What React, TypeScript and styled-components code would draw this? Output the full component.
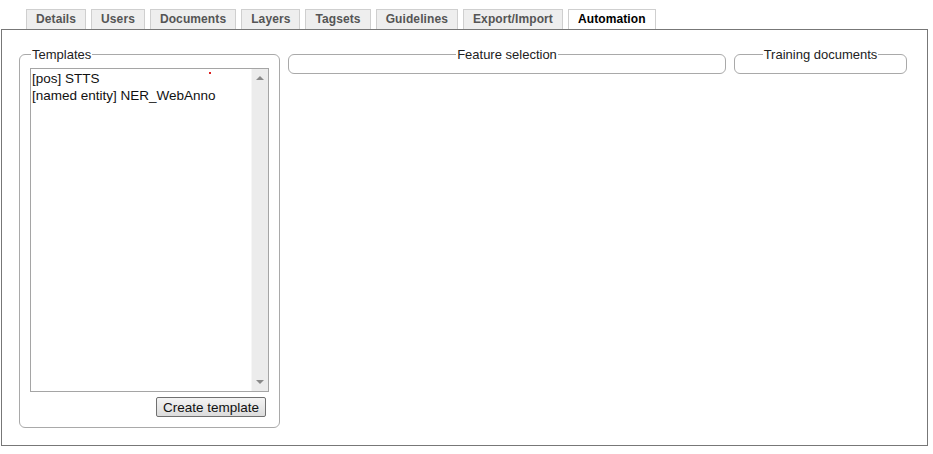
import React from "react";
import styled, { createGlobalStyle } from "styled-components";

const GlobalStyle = createGlobalStyle`
  html, body {
    margin: 0;
    padding: 0;
    background: #fff;
    font-family: "Liberation Sans", Arial, sans-serif;
  }
`;

const Page = styled.div`
  padding: 9px 0 0 1px;
  width: 927px;
`;

const TabBar = styled.ul`
  display: flex;
  gap: 5px;
  margin: 0;
  padding: 0 0 0 25px;
  list-style: none;
  height: 20px;
`;

const Tab = styled.li<{ $active?: boolean }>`
  box-sizing: border-box;
  height: 20px;
  padding: 0 9px;
  border: 1px solid #cfcfcf;
  border-bottom: none;
  background: ${(p) => (p.$active ? "#fff" : "#eeeeee")};
  color: ${(p) => (p.$active ? "#000" : "#555")};
  font-size: 12px;
  font-weight: bold;
  line-height: 19px;
  letter-spacing: 0.1px;
`;

const Panel = styled.div`
  box-sizing: border-box;
  height: 417px;
  border: 1px solid #777;
  padding: 17px 0 0 17px;
  display: flex;
  align-items: flex-start;
  gap: 8px;
`;

const Fieldset = styled.fieldset<{ $width: number }>`
  box-sizing: border-box;
  width: ${(p) => p.$width}px;
  margin: 0;
  padding: 0 10px 10px;
  border: 1px solid #a9a9a9;
  border-radius: 6px;
  min-width: 0;
`;

const Legend = styled.legend<{ $center?: boolean }>`
  padding: 0 1px;
  margin: ${(p) => (p.$center ? "0 auto" : "0 0 0 1px")};
  font-size: 13px;
  line-height: 15px;
  color: #222;
`;

const ListBox = styled.div`
  position: relative;
  box-sizing: border-box;
  height: 324px;
  margin-top: 6px;
  border: 1px solid #a5a5a5;
  display: flex;
`;

const Options = styled.div`
  flex: 1;
  padding: 1px 0 0 1px;
  font-size: 13.5px;
  line-height: 17px;
  color: #111;
`;

const ScrollBar = styled.div`
  width: 16px;
  background: #ececec;
  border-left: 1px solid #f6f6f6;
  display: flex;
  flex-direction: column;
  justify-content: space-between;
  align-items: center;
  padding: 7px 0;
`;

const Arrow = styled.div<{ $down?: boolean }>`
  width: 0;
  height: 0;
  border-left: 4px solid transparent;
  border-right: 4px solid transparent;
  ${(p) =>
    p.$down
      ? "border-top: 4px solid #8a8a8a;"
      : "border-bottom: 4px solid #8a8a8a;"}
`;

const Dot = styled.span`
  position: absolute;
  left: 178px;
  top: 3px;
  width: 2px;
  height: 2px;
  background: #d22;
`;

const ButtonRow = styled.div`
  display: flex;
  justify-content: flex-end;
  padding: 5px 3px 0 0;
`;

const Button = styled.button`
  height: 20px;
  padding: 0 6px;
  border: 1px solid #707070;
  border-radius: 2px;
  background: linear-gradient(#f4f4f4, #dcdcdc);
  font-family: "Liberation Sans", Arial, sans-serif;
  font-size: 13.5px;
  color: #111;
`;

const EmptyBody = styled.div`
  height: 1px;
`;

const tabs = [
  "Details",
  "Users",
  "Documents",
  "Layers",
  "Tagsets",
  "Guidelines",
  "Export/Import",
  "Automation",
];

export default function App() {
  return (
    <Page>
      <GlobalStyle />
      <TabBar>
        {tabs.map((t) => (
          <Tab key={t} $active={t === "Automation"}>
            {t}
          </Tab>
        ))}
      </TabBar>
      <Panel>
        <Fieldset $width={261}>
          <Legend>Templates</Legend>
          <ListBox>
            <Options>
              <div>[pos] STTS</div>
              <div>[named entity] NER_WebAnno</div>
            </Options>
            <ScrollBar>
              <Arrow />
              <Arrow $down />
            </ScrollBar>
            <Dot />
          </ListBox>
          <ButtonRow>
            <Button>Create template</Button>
          </ButtonRow>
        </Fieldset>
        <Fieldset $width={438}>
          <Legend $center>Feature selection</Legend>
          <EmptyBody />
        </Fieldset>
        <Fieldset $width={173}>
          <Legend $center>Training documents</Legend>
          <EmptyBody />
        </Fieldset>
      </Panel>
    </Page>
  );
}
